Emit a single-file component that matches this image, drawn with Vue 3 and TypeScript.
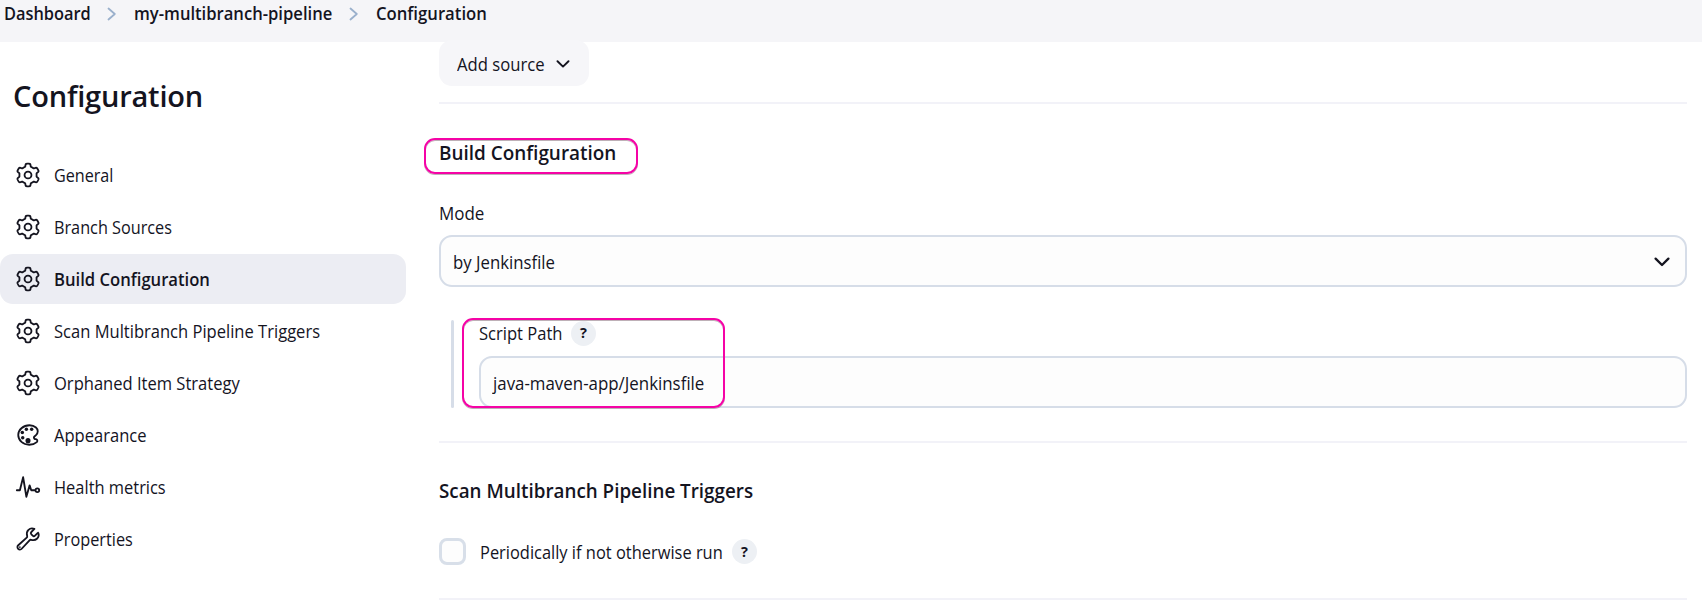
<script setup lang="ts">
import { ref } from 'vue'

type IconName = 'gear' | 'palette' | 'pulse' | 'wrench'

interface NavItem {
  label: string
  icon: IconName
  fit: string
}

const crumbs = [
  { label: 'Dashboard', fit: 'c1' },
  { label: 'my-multibranch-pipeline', fit: 'c2' },
  { label: 'Configuration', fit: 'c3' },
]

const navItems: NavItem[] = [
  { label: 'General', icon: 'gear', fit: 'n1' },
  { label: 'Branch Sources', icon: 'gear', fit: 'n2' },
  { label: 'Build Configuration', icon: 'gear', fit: 'n3' },
  { label: 'Scan Multibranch Pipeline Triggers', icon: 'gear', fit: 'n4' },
  { label: 'Orphaned Item Strategy', icon: 'gear', fit: 'n4' },
  { label: 'Appearance', icon: 'palette', fit: 'n4' },
  { label: 'Health metrics', icon: 'pulse', fit: 'n7' },
  { label: 'Properties', icon: 'wrench', fit: 'n8' },
]

// Outline of a gear with six soft teeth, centred in a 512 box
function gearOutline(): string {
  const points: string[] = []
  for (let deg = 0; deg < 360; deg += 2) {
    const a = (deg * Math.PI) / 180
    const wave = Math.tanh(-3 * Math.cos(6 * a)) / Math.tanh(3)
    const r = 196 + 27 * wave
    points.push(`${(256 + r * Math.cos(a)).toFixed(1)} ${(256 + r * Math.sin(a)).toFixed(1)}`)
  }
  return `M${points.join('L')}Z`
}
const gear = gearOutline()

const active = ref(2)
const periodic = ref(false)
const scriptPath = ref('java-maven-app/Jenkinsfile')
</script>

<template>
  <div class="page">
    <header class="crumbs">
      <template v-for="(c, i) in crumbs" :key="c.label">
        <svg v-if="i > 0" class="sep" viewBox="0 0 10 14"><path d="M1.5 1.5 7.8 7 1.5 12.5" /></svg>
        <a class="crumb" :class="c.fit"><span class="t">{{ c.label }}</span></a>
      </template>
    </header>

    <div class="body">
      <aside class="side">
        <h1>Configuration</h1>
        <nav>
          <a
            v-for="(n, i) in navItems"
            :key="n.label"
            class="item"
            :class="[n.fit, { active: i === active }]"
            @click="active = i"
          >
            <svg class="icon" :class="n.icon" viewBox="0 0 512 512">
              <template v-if="n.icon === 'gear'">
                <circle cx="256" cy="256" r="68" />
                <path :d="gear" />
              </template>
              <template v-else-if="n.icon === 'palette'">
                <path
                  d="M430.11 347.9c-6.6-6.1-16.3-7.6-24.6-9-11.5-1.9-15.9-4-22.6-10-14.3-12.7-14.3-31.1 0-43.8l30.3-26.9c46.4-41 46.4-108.2 0-149.2-34.2-30.1-80.1-45-127.8-45-55.7 0-113.9 20.3-158.8 60.1-83.5 73.8-83.5 194.7 0 268.5 41.5 36.7 97.5 55 152.9 55.4h1.7c55.4 0 110-17.9 148.8-52.4 14.4-12.7 11.99-36.6.1-47.7z"
                />
                <circle class="dot" cx="144" cy="208" r="34" />
                <circle class="dot" cx="152" cy="311" r="34" />
                <circle class="dot" cx="224" cy="144" r="34" />
                <circle class="dot" cx="256" cy="367" r="50" />
                <circle class="dot" cx="328" cy="144" r="34" />
              </template>
              <template v-else-if="n.icon === 'pulse'">
                <path d="M36 320h60l64-256 64 384 64-224 32 96h64" />
                <circle cx="440" cy="320" r="36" />
              </template>
              <template v-else>
                <path
                  d="M393.87 190a32.1 32.1 0 01-45.25 0l-26.57-26.57a32.09 32.09 0 010-45.26L382.19 58a1 1 0 00-.3-1.64c-38.82-16.64-89.15-8.16-121.11 23.57-30.58 30.35-32.32 76-21.12 115.84a31.93 31.93 0 01-9.06 32.08L64 380a48.17 48.17 0 1068 68l153.86-167a31.93 31.93 0 0131.6-9.13c39.54 10.59 84.54 8.6 114.72-21.19 32.49-32.06 39.08-88.8 24.12-120.9a1 1 0 00-1.66-.28z"
                />
                <circle class="dot" cx="96" cy="416" r="16" />
              </template>
            </svg>
            <span class="t">{{ n.label }}</span>
          </a>
        </nav>
      </aside>

      <main class="main">
        <section class="sources">
          <button class="add">
            <span class="add-label"><span class="t">Add source</span></span>
            <svg viewBox="0 0 14 8"><path d="M1.5 1.2 7 6.6 12.5 1.2" /></svg>
          </button>
        </section>

        <section class="build">
          <h2 class="h-build"><span class="t">Build Configuration</span></h2>
          <div class="mark mark-title"></div>
          <label class="label mode"><span class="t">Mode</span></label>
          <div class="field select">
            <span class="t">by Jenkinsfile</span>
            <svg viewBox="0 0 16 10"><path d="M1.6 1.6 8 8 14.4 1.6" /></svg>
          </div>
          <div class="nested">
            <div class="label row">
              <span class="l-path"><span class="t">Script Path</span></span>
              <a class="help">?</a>
            </div>
            <div class="field path"><span class="t">{{ scriptPath }}</span></div>
            <div class="mark mark-path"></div>
          </div>
        </section>

        <section class="triggers">
          <h2 class="h-scan"><span class="t">Scan Multibranch Pipeline Triggers</span></h2>
          <div class="check-row" @click="periodic = !periodic">
            <span class="box" :class="{ on: periodic }"></span>
            <span class="l-per"><span class="t">Periodically if not otherwise run</span></span>
            <a class="help">?</a>
          </div>
        </section>
      </main>
    </div>
  </div>
</template>

<style>
body {
  margin: 0;
  background: #fff;
}
</style>

<style scoped>
.page {
  --k: 0.92;
  height: 613px;
  overflow: hidden;
  box-sizing: border-box;
  background: #fff;
  color: #14141f;
  font: 400 18px/26px 'Open Sans', 'Noto Sans', sans-serif;
  white-space: nowrap;
}
.page * {
  box-sizing: border-box;
}
/* Slightly condensed text; --k is the horizontal factor of each label */
.t {
  display: inline-block;
  transform: scaleX(var(--k));
  transform-origin: 0 50%;
}
.c1 { --k: 0.908; width: 86px; }
.c2 { --k: 0.922; width: 198px; }
.c3 { --k: 0.927; }
.n1 { --k: 0.897; }
.n2 { --k: 0.902; }
.n3 { --k: 0.924; }
.n4 { --k: 0.919; }
.n7 { --k: 0.913; }
.n8 { --k: 0.904; }
.h-build { --k: 0.97; }
.h-scan { --k: 0.965; }
.mode { --k: 0.943; }
.select { --k: 0.931; }
.path { --k: 0.9375; }
svg {
  display: block;
  flex: none;
  fill: none;
  stroke: currentColor;
  stroke-linecap: round;
  stroke-linejoin: round;
}
.crumbs {
  display: flex;
  height: 42px;
  padding: 0 0 0 4px;
  background: #f5f5f8;
  font-weight: 600;
}
.crumb {
  flex: none;
}
.sep {
  width: 10px;
  height: 14px;
  margin: 7px 17px 0 17px;
  color: #9ab0cc;
  stroke-width: 1.8;
}
.body {
  display: flex;
}
.side {
  width: 406px;
  flex: none;
}
h1 {
  margin: 34px 0 34px 13px;
  font-size: 29px;
  line-height: 40px;
  font-weight: 600;
  letter-spacing: -0.2px;
}
nav {
  display: flex;
  flex-direction: column;
  gap: 2px;
}
.item {
  display: flex;
  align-items: center;
  gap: 13px;
  height: 50px;
  padding-left: 15px;
  border-radius: 13px;
}
.item.active {
  background: #ecedf3;
  font-weight: 600;
}
.icon {
  width: 26px;
  height: 26px;
  stroke-width: 36;
}
.dot {
  fill: currentColor;
  stroke: none;
}
.main {
  flex: 1;
  margin: 0 15px 0 33px;
}
section {
  position: relative;
  border-bottom: 2px solid #f2f2f8;
}
.sources {
  display: flex;
  align-items: flex-start;
  height: 62px;
}
.add {
  --k: 0.926;
  display: flex;
  align-items: center;
  width: 150px;
  height: 46px;
  margin-top: -2px;
  padding: 0 0 0 18px;
  border: 0;
  border-radius: 13px;
  background: #f6f6f9;
  color: inherit;
  font: inherit;
}
.add-label {
  width: 99px;
  padding-top: 2px;
  text-align: left;
}
.add svg {
  width: 14px;
  height: 8px;
  margin-top: 1px;
  stroke-width: 1.9;
}
h2 {
  margin: 0;
  font-size: 19.5px;
  line-height: 28px;
  font-weight: 600;
}
.build {
  height: 339px;
  padding-top: 35px;
}
.label {
  display: block;
  height: 26px;
}
.mode {
  margin: 33px 0 9px;
}
.field {
  display: flex;
  align-items: center;
  justify-content: space-between;
  height: 52px;
  padding: 2px 15px 0 12px;
  border: 2px solid #d6dde8;
  border-radius: 13px;
  background: #fdfdfd;
}
.select svg {
  width: 16px;
  height: 10px;
  margin-top: -1px;
  stroke-width: 2.3;
}
.nested {
  position: relative;
  height: 88px;
  margin: 33px 0 0 12px;
  padding-left: 28px;
}
.nested::before {
  content: '';
  position: absolute;
  inset: 0 auto 0 0;
  width: 3px;
  border-radius: 2px;
  background: #d6dde8;
}
.row {
  display: flex;
  align-items: center;
  height: 26px;
  margin-bottom: 10px;
}
.l-path {
  width: 92px;
}
.help {
  display: flex;
  align-items: center;
  justify-content: center;
  flex: none;
  width: 25px;
  height: 25px;
  border-radius: 50%;
  background: #edf0f4;
  font-size: 14.5px;
  font-weight: 700;
}
.mark {
  position: absolute;
  border: 2px solid #f503a6;
  border-radius: 11px;
  box-shadow: 0 1px 0 rgba(110, 80, 95, 0.45), inset 0 1px 0 rgba(110, 80, 95, 0.45);
  pointer-events: none;
}
.mark-title {
  left: -15px;
  top: 34px;
  width: 214px;
  height: 36px;
}
.mark-path {
  left: 11px;
  top: -2px;
  width: 263px;
  height: 90px;
}
.triggers {
  height: 157px;
  padding-top: 34px;
}
.check-row {
  display: flex;
  align-items: center;
  height: 27px;
  margin-top: 33px;
}
.box {
  flex: none;
  width: 27px;
  height: 27px;
  margin-right: 14px;
  border: 3px solid #d8dfe9;
  border-radius: 8px;
  background: #fdfdfd;
}
.box.on {
  background: #d6dde8;
}
.l-per {
  --k: 0.913;
  width: 252px;
  padding-top: 1px;
}
</style>
